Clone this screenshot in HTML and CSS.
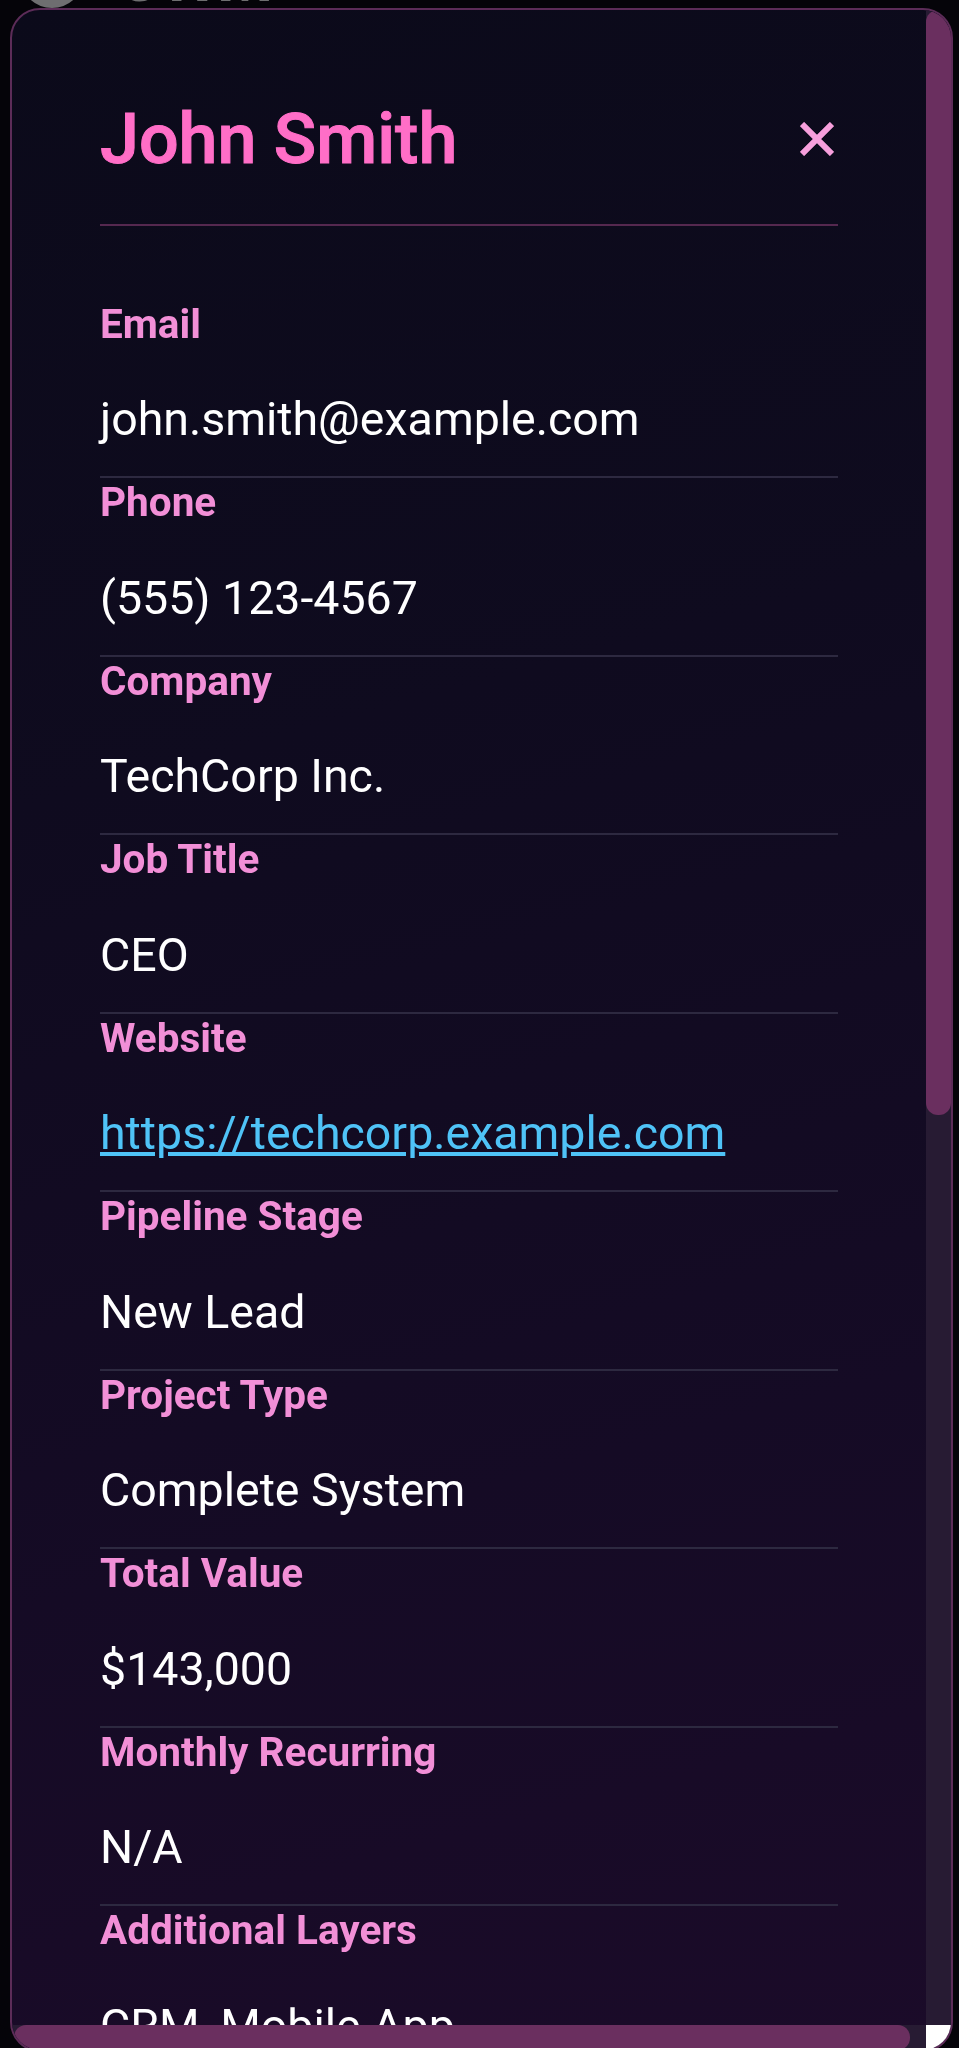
FILE: index.html
```html
<!DOCTYPE html>
<html lang="en">
<head>
    <meta charset="UTF-8">
    <meta name="viewport" content="width=device-width, initial-scale=1.0">
    <title>Contact Details</title>
    <link rel="stylesheet" href="styles.css">
</head>
<body>

    <!-- page behind the modal -->
    <header class="app-bar">
        <span class="brand-ring"></span>
        <span class="brand-name">CRM</span>
    </header>

    <div class="overlay">
        <div class="modal">
            <div class="modal-body">
                <div class="modal-header">
                    <h2 class="contact-name">John Smith</h2>
                    <button class="close-btn" aria-label="Close">
                        <svg width="34" height="34" viewBox="0 0 34 34">
                            <path d="M2 2 L32 32 M32 2 L2 32" stroke="currentColor" stroke-width="6" fill="none"/>
                        </svg>
                    </button>
                </div>

                <div class="field">
                    <span class="field-label">Email</span>
                    <div class="field-value">john.smith@example.com</div>
                </div>
                <div class="field">
                    <span class="field-label">Phone</span>
                    <div class="field-value">(555) 123-4567</div>
                </div>
                <div class="field">
                    <span class="field-label">Company</span>
                    <div class="field-value">TechCorp Inc.</div>
                </div>
                <div class="field">
                    <span class="field-label">Job Title</span>
                    <div class="field-value">CEO</div>
                </div>
                <div class="field">
                    <span class="field-label">Website</span>
                    <div class="field-value"><a href="#">https://techcorp.example.com</a></div>
                </div>
                <div class="field">
                    <span class="field-label">Pipeline Stage</span>
                    <div class="field-value">New Lead</div>
                </div>
                <div class="field">
                    <span class="field-label">Project Type</span>
                    <div class="field-value">Complete System</div>
                </div>
                <div class="field">
                    <span class="field-label">Total Value</span>
                    <div class="field-value">$143,000</div>
                </div>
                <div class="field">
                    <span class="field-label">Monthly Recurring</span>
                    <div class="field-value">N/A</div>
                </div>
                <div class="field">
                    <span class="field-label">Additional Layers</span>
                    <div class="field-value">CRM, Mobile App</div>
                </div>
                <div class="field">
                    <span class="field-label">Notes</span>
                    <div class="field-value">Interested in a full rollout next quarter.</div>
                </div>
            </div>

            <!-- scrollbars -->
            <div class="scroll-track vertical"><div class="scroll-thumb"></div></div>
            <div class="scroll-track horizontal"><div class="scroll-thumb"></div></div>
            <div class="scroll-corner"></div>
        </div>
    </div>

</body>
</html>
```

FILE: styles.css
```css
body {
    margin: 0;
    background-color: #050409;
    font-family: Roboto, "Liberation Sans", Arial, sans-serif;
    overflow: hidden;
}

/* page behind the modal, only a sliver shows */
.app-bar {
    height: 8px;
    overflow: hidden;
    display: flex;
    align-items: flex-end;
    gap: 34px;
    padding-left: 20px;
}
.brand-ring {
    width: 64px;
    height: 64px;
    border: 9px solid #6e6e70;
    border-radius: 50%;
    box-sizing: border-box;
    flex-shrink: 0;
}
.brand-name {
    font-size: 64px;
    font-weight: bold;
    color: #6e6e70;
    line-height: 1;
    margin-bottom: -4px;
    letter-spacing: 8px;
}

.overlay {
    position: fixed;
    inset: 0;
    padding: 8px 6px 0 10px;
    overflow: hidden;
}

.modal {
    height: 2044px;
    box-sizing: border-box;
    border: 2px solid #5c2c58;
    border-radius: 30px;
    overflow: hidden;
    background: linear-gradient(165deg, #0b0a1a 0%, #0f0b1f 35%, #150b25 70%, #1b0b29 100%);
    display: grid;
    grid-template-columns: 1fr 25px;
    grid-template-rows: 1fr 25px;
}

.modal-body {
    overflow: hidden;
    padding: 88px 88px 0;
    min-width: 0;
}

.modal-header {
    display: flex;
    justify-content: space-between;
    align-items: center;
    padding-bottom: 44px;
    border-bottom: 2px solid #55284f;
    margin-bottom: 73.5px;
}
.contact-name {
    margin: 0;
    font-size: 70px;
    font-weight: 500;
    line-height: normal;
    color: #ff6ec7;
    -webkit-text-stroke: 1px #ff6ec7;
}
.close-btn {
    width: 42px;
    height: 42px;
    padding: 0;
    border: none;
    background: none;
    color: #f79fdc;
    display: flex;
    align-items: center;
    justify-content: center;
    cursor: pointer;
}

.field {
    border-bottom: 2px solid #2d2940;
    padding-bottom: 30px;
}
.field-label {
    display: block;
    font-size: 40.5px;
    font-weight: bold;
    line-height: normal;
    color: #f28fd7;
}
.field-value {
    margin-top: 44.5px;
    font-size: 46.5px;
    line-height: normal;
    color: #ffffff;
    white-space: nowrap;
}
.field-value a {
    color: #4fc3f7;
}

.scroll-track {
    background-color: #271b33;
}
.scroll-thumb {
    background-color: #6a2f5f;
    border-radius: 12px;
}
.scroll-track.vertical .scroll-thumb {
    height: 1105px;
}
.scroll-track.horizontal .scroll-thumb {
    width: 896px;
    height: 100%;
    margin-left: 2px;
}
.scroll-corner {
    background-color: #ffffff;
}
```
